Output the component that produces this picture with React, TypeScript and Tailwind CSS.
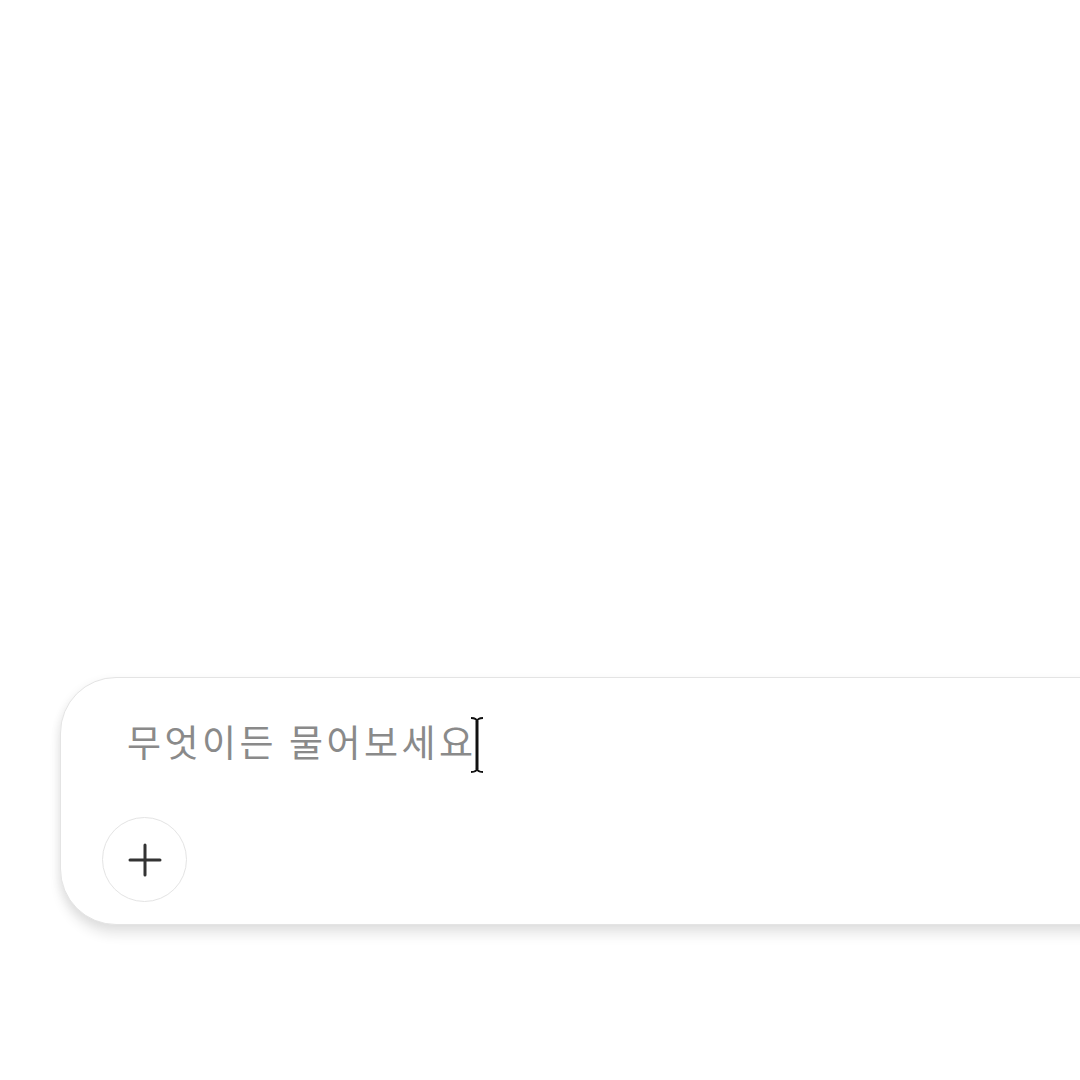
import React from "react";

export default function App() {
  return (
    <div className="w-[1080px] h-[1080px] bg-white overflow-hidden" style={{ fontFamily: '"Noto Sans CJK KR", "Noto Sans", sans-serif' }}>
      <div className="pt-[677px] pl-[60px]">
        <div className="w-[1120px] h-[248px] bg-white rounded-[56px] border border-[#e4e4e4] shadow-[0_10px_12px_rgba(0,0,0,0.09),-2px_2px_8px_rgba(0,0,0,0.05)] flex flex-col">
          <div className="pl-[66px] pt-[36px] flex items-center h-[90px]">
            <span className="text-[37px] leading-none text-[#8a8a8a] tracking-[3.5px]">무엇이든 물어보세요</span>
            <svg width="16" height="58" viewBox="0 0 16 58" className="-ml-[8px] mt-[8px]">
              <path d="M2 2 Q8 2 8 6 M14 2 Q8 2 8 6 M8 52 Q8 56 2 56 M8 52 Q8 56 14 56" stroke="#111" strokeWidth="1.8" fill="none" />
              <path d="M8 5 L8 53" stroke="#111" strokeWidth="3" />
            </svg>
          </div>
          <div className="pl-[41px] pt-[49px]">
            <div className="w-[85px] h-[85px] rounded-full border-[1.5px] border-[#e4e4e4] flex items-center justify-center bg-white">
              <svg width="36" height="36" viewBox="0 0 36 36">
                <path d="M18 3 V33 M3 18 H33" stroke="#333" strokeWidth="3" strokeLinecap="round" />
              </svg>
            </div>
          </div>
        </div>
      </div>
    </div>
  );
}
